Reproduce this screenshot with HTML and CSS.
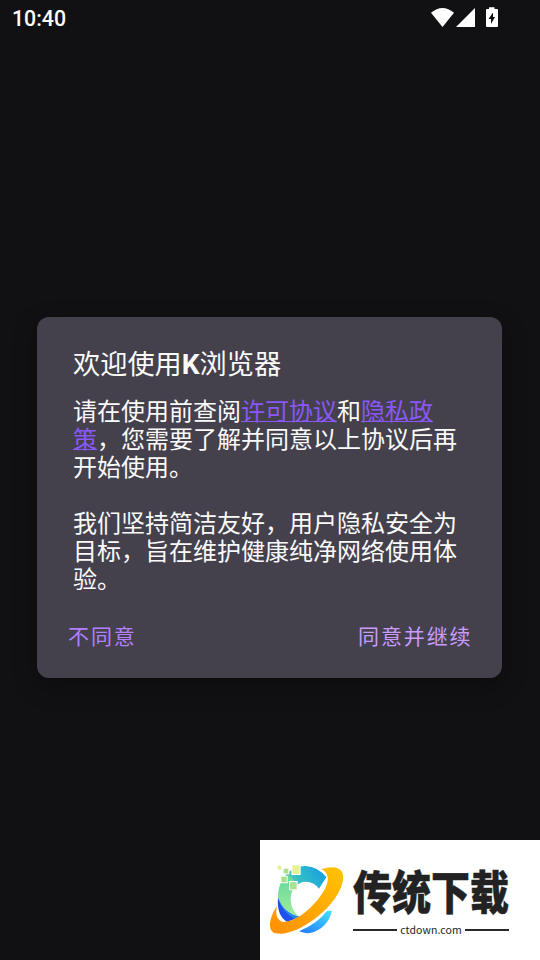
FILE: index.html
```html
<!DOCTYPE html>
<html lang="zh-CN">
<head>
<meta charset="utf-8">
<title>K浏览器</title>
<link rel="stylesheet" href="styles.css">
</head>
<body>
<header class="status">
  <span class="clock">10:40</span>
  <svg class="status-icons" viewBox="0 0 72 24" fill="#fff">
    <path d="M1 4.8Q12.500-4.600 24 4.800L12.500 19Z"/>
    <path d="M26 19L45 0V19Z"/>
    <path fill-rule="evenodd" d="M59 1V-.8h5.500V1h2.500q1 0 1 1v16q0 1-1 1H57q-1 0-1-1V2q0-1 1-1ZM63 4.500l-4.500 6.500H61v5l4-7h-2Z"/>
  </svg>
</header>
<main class="stage">
  <section class="dialog">
    <h1>欢迎使用<b>K</b>浏览器</h1>
    <p>请在使用前查阅<a>许可协议</a>和<a>隐私政<br>策</a>，您需要了解并同意以上协议后再<br>开始使用。</p>
    <p>我们坚持简洁友好，用户隐私安全为<br>目标，旨在维护健康纯净网络使用体<br>验。</p>
    <div class="actions"><button class="decline">不同意</button><button class="accept">同意并继续</button></div>
  </section>
</main>
<aside class="brand">
  <svg class="logo" viewBox="0 0 270 360">
    <defs>
      <linearGradient id="orange" x1="1" y1="0" x2="0" y2="1"><stop stop-color="#ffc400"/><stop offset="1" stop-color="#ff8e08"/></linearGradient>
      <linearGradient id="cyan" x1="0" y1=".6" x2="1" y2="0"><stop stop-color="#8be697"/><stop offset=".45" stop-color="#34bfc5"/><stop offset="1" stop-color="#129be5"/></linearGradient>
      <linearGradient id="green" x1="0" y1="0" x2="0" y2="1"><stop stop-color="#62d5a1"/><stop offset="1" stop-color="#a0ee96"/></linearGradient>
      <linearGradient id="tail" x1="0" y1="1" x2="1" y2="0"><stop stop-color="#2378fa"/><stop offset="1" stop-color="#42e2ff"/></linearGradient>
    </defs>
    <path fill="url(#cyan)" d="M54 175C53 113 93 78 137 78Q174 80 199 112L177 146Q158 121 128 126Q91 138 91 180L96 209Z"/>
    <path fill="url(#green)" d="M54 175Q55 128 86 103L112 133Q91 148 91 180Q95 214 119 231Q68 217 54 175Z"/>
    <path fill="#1f50ee" d="M54 173Q69 218 119 231L82 246Q49 226 54 173Z"/>
    <path fill="#2688ed" d="M54 173Q69 218 119 231L105 237Q64 214 54 173Z"/>
    <path fill="url(#tail)" d="M117 274Q172 251 201 213L216 212Q203 265 151 279Q132 281 117 274Z"/>
    <path fill="url(#orange)" d="M184 88C216 76 245 80 249 105C253 145 217 194 175 228C132 262 83 287 48 280C20 274 28 232 51 197Q42 240 71 246C112 243 157 204 183 166C210 128 211 101 184 88Z"/>
    <g class="pixels"><path fill="#e6f292" d="M97 76h22v26H97z"/><path fill="#a8df8b" d="M71 86h14v14H71z"/><path fill="#a5df87" d="M64 110h16v17H64z"/><path fill="#a5e58e" d="M90 126h20v22H90z"/><path fill="#e6f292" d="M53 77h11v12H53z"/></g>
  </svg>
  <div class="wordmark">
    <div class="name">传统下载</div>
    <div class="domain"><i></i><span>ctdown.com</span><i></i></div>
  </div>
</aside>
</body>
</html>
```

FILE: styles.css
```css
* { box-sizing: border-box; }
body {
  margin: 0;
  width: 540px;
  height: 960px;
  overflow: hidden;
  position: relative;
  background: #111113;
  color: #fafafa;
  font-family: "Noto Sans CJK SC", sans-serif;
}
.status {
  height: 37px;
  padding: 8px 38px 0 12px;
  display: flex;
  justify-content: space-between;
  color: #fff;
}
.clock { font: 500 21.3px/22px Roboto, sans-serif; }
.status-icons { width: 72px; height: 24px; overflow: visible; }
.stage { padding: 280px 38px 0 37px; }
.dialog {
  height: 361px;
  padding: 28px 31px 0 36px;
  border-radius: 12px;
  background: #44414d;
  box-shadow: 0 8px 24px rgba(0, 0, 0, .3);
}
h1 { margin: 0 0 14px; font-size: 27.2px; line-height: 35px; font-weight: 400; }
h1 b { font: 700 28px/35px Roboto, sans-serif; }
p { margin: 0 0 28px; font-size: 24px; line-height: 28px; white-space: nowrap; }
a { color: #8a57f9; text-decoration: underline; text-decoration-thickness: 1px; text-underline-offset: 1px; }
.actions { display: flex; justify-content: space-between; margin: -1px 0 0 -5px; }
button {
  margin: 0;
  padding: 0;
  border: 0;
  background: none;
  font: 400 21px/32px "Noto Sans CJK SC", sans-serif;
  letter-spacing: 1.9px;
}
.decline { color: #b47fff; }
.accept { color: #c89bff; margin-right: -1.5px; }
.brand {
  position: absolute;
  right: 0;
  bottom: 0;
  width: 280px;
  height: 120px;
  display: flex;
  background: #fff;
  color: #222;
}
.logo { width: 90px; height: 120px; flex: none; }
.pixels { stroke: #fff; stroke-width: 6px; paint-order: stroke; }
.wordmark { width: 159px; padding: 25px 0 0 3px; }
.name {
  height: 48px;
  font-size: 39px;
  line-height: 48px;
  font-weight: 900;
  white-space: nowrap;
  transform: scaleY(1.18);
  -webkit-text-stroke: .4px #222;
}
.domain { display: flex; align-items: center; gap: 3px; height: 16px; margin-top: 9px; font: 400 10.5px/16px "Noto Sans CJK SC", sans-serif; letter-spacing: .1px; }
.domain i { flex: 1; height: 2px; background: #2c2728; }
```
